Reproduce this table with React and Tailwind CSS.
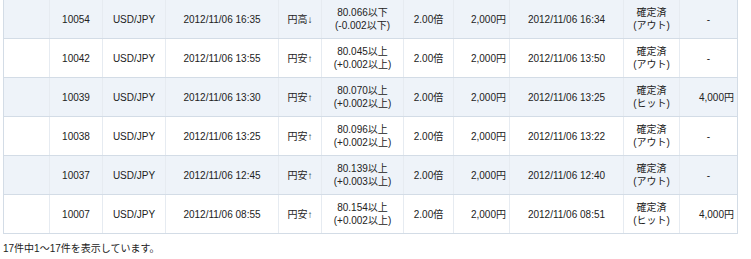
import React from "react";

const rows = [
  ["10054", "2012/11/06 16:35", "円高↓", "80.066以下", "(-0.002以下)", "2012/11/06 16:34", "(アウト)", "-"],
  ["10042", "2012/11/06 13:55", "円安↑", "80.045以上", "(+0.002以上)", "2012/11/06 13:50", "(アウト)", "-"],
  ["10039", "2012/11/06 13:30", "円安↑", "80.070以上", "(+0.002以上)", "2012/11/06 13:25", "(ヒット)", "4,000円"],
  ["10038", "2012/11/06 13:25", "円安↑", "80.096以上", "(+0.002以上)", "2012/11/06 13:22", "(アウト)", "-"],
  ["10037", "2012/11/06 12:45", "円安↑", "80.139以上", "(+0.003以上)", "2012/11/06 12:40", "(アウト)", "-"],
  ["10007", "2012/11/06 08:55", "円安↑", "80.154以上", "(+0.002以上)", "2012/11/06 08:51", "(ヒット)", "4,000円"],
];

const cell = "flex flex-col items-center justify-center border-l border-[#e6ebf1] h-full shrink-0";

export default function App() {
  return (
    <div
      className="bg-white w-[751px] h-[259px] overflow-hidden text-[10px] text-[#222]"
      style={{ fontFamily: '"Liberation Sans", "Noto Sans CJK JP", sans-serif' }}
    >
      <div className="ml-[3px] w-[735px] border-r border-[#d3dce6]">
        {rows.map((r, i) => (
          <div
            key={i}
            className={`flex h-[39px] border-b border-[#d3dce6] leading-[13px] ${i % 2 === 0 ? "bg-[#eef3f9]" : "bg-white"}`}
          >
            <div className="w-[46px] h-full shrink-0 border-l border-[#d3dce6]"></div>
            <div className={`${cell} w-[53px]`}>{r[0]}</div>
            <div className={`${cell} w-[63px]`}>USD/JPY</div>
            <div className={`${cell} w-[113px]`}>{r[1]}</div>
            <div className={`${cell} w-[43px]`}>{r[2]}</div>
            <div className={`${cell} w-[82px]`}>
              <span>{r[3]}</span>
              <span>{r[4]}</span>
            </div>
            <div className={`${cell} w-[50px]`}>2.00倍</div>
            <div className={`${cell} w-[56px] !items-end pr-[3px]`}>2,000円</div>
            <div className={`${cell} w-[114px]`}>{r[5]}</div>
            <div className={`${cell} w-[56px]`}>
              <span>確定済</span>
              <span>{r[6]}</span>
            </div>
            <div className={`${cell} w-[58px] ${r[7] === "-" ? "" : "!items-end pr-[3px]"}`}>{r[7]}</div>
          </div>
        ))}
      </div>
      <div className="ml-[3px] mt-[8px] leading-[13px]">17件中1〜17件を表示しています。</div>
    </div>
  );
}
